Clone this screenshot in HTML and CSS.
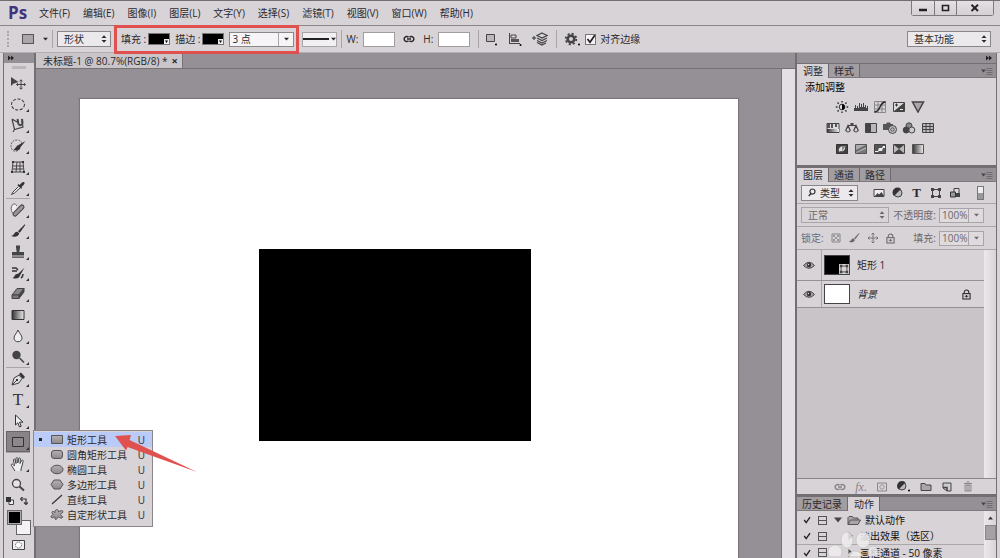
FILE: index.html
```html
<!DOCTYPE html>
<html lang="zh-CN">
<head>
<meta charset="utf-8">
<title>未标题-1</title>
<link rel="stylesheet" href="styles.css">
</head>
<body>
<svg class="sprite" aria-hidden="true">
  <defs>
    <linearGradient id="g-fade" x1="0" x2="1" y1="0" y2="0"><stop offset="0" stop-color="#333"/><stop offset="1" stop-color="#eee"/></linearGradient>
    <linearGradient id="g-shape" x1="0" x2="0" y1="0" y2="1"><stop offset="0" stop-color="#b4b0b4"/><stop offset="1" stop-color="#8c888c"/></linearGradient>
  </defs>
  <symbol id="updown" viewBox="0 0 6 8"><path d="M0.5 3 3 0.3 5.5 3zM0.5 5 3 7.7 5.5 5z" fill="currentColor"/></symbol>
  <symbol id="down" viewBox="0 0 6 4"><path d="M0 0.5h6L3 3.8z" fill="currentColor"/></symbol>
  <symbol id="forward" viewBox="0 0 6 6"><path d="M0 0.5 3 3 0 5.5zM3 0.5 6 3 3 5.5z" fill="currentColor"/></symbol>
  <symbol id="panelmenu" viewBox="0 0 12 8"><path d="M0 2.5h5L2.500 5.500z" fill="#444"/><path d="M5.500 1.500h6M5.500 3.500h6M5.500 5.500h6M5.500 7.500h6" stroke="#666" stroke-width=".8"/></symbol>
  <symbol id="tick" viewBox="0 0 10 10"><path d="M1.500 5 4 8.200 8.800 1.300" fill="none" stroke="#222" stroke-width="1.700"/></symbol>
  <symbol id="link" viewBox="0 0 12 8"><path d="M5.500 2.300A2.500 2.500 0 1 0 5.500 5.700M6.500 2.300A2.500 2.500 0 1 1 6.500 5.700M4 4h4" fill="none" stroke="currentColor" stroke-width="1.500"/></symbol>
  <symbol id="eye" viewBox="0 0 12 8"><path d="M.5 4.500Q6-2 11.500 4.500Q6 10 .5 4.500z" fill="#a9a5a9" stroke="#444" stroke-width="1"/><circle cx="6" cy="4" r="2.200" fill="#333"/><circle cx="5.500" cy="3.500" r=".7" fill="#ddd"/></symbol>
  <symbol id="lock" viewBox="0 0 10 12"><path d="M2.500 5V3.500a2.500 2.500 0 0 1 5 0V5" fill="none" stroke="currentColor" stroke-width="1.200"/><rect x="1" y="5" width="8" height="6" fill="none" stroke="currentColor" stroke-width="1.200"/><path d="M5 6.500v3M3 8h4" stroke="currentColor"/></symbol>
  <symbol id="folder" viewBox="0 0 14 11"><path d="M1 9.500V2.500l1-1h3.500l1 1.500H11v2M1 9.500 3.500 5H13.500L11 9.500z" fill="#aaa6aa" stroke="#555" stroke-width="1"/></symbol>
  <symbol id="brush" viewBox="0 0 16 16"><path d="M14.700 1.200 8 8.300 9.800 9.800 15.300 2z" fill="currentColor"/><path d="M7.300 8.800C4.500 8.200 4.300 12.500 1 13c3.500 1.600 7.600.7 8.200-2.800z" fill="currentColor"/></symbol>
  <symbol id="vectorbox" viewBox="0 0 12 12"><path d="M2.500 2.500h7v7h-7z" fill="none" stroke="#444"/><path d="M1 1h3v3H1zM8 1h3v3H8zM1 8h3v3H1zM8 8h3v3H8z" fill="#444"/></symbol>
</svg>

<div class="app">
  <header class="menubar">
    <div class="logo">Ps</div>
    <nav class="menus" aria-label="主菜单">
      <button>文件(F)</button><button>编辑(E)</button><button>图像(I)</button><button>图层(L)</button><button>文字(Y)</button><button>选择(S)</button><button>滤镜(T)</button><button>视图(V)</button><button>窗口(W)</button><button>帮助(H)</button>
    </nav>
    <div class="window-buttons">
      <button aria-label="最小化"><svg width="10" height="8"><path d="M1 6h8" stroke="#222" stroke-width="2.500"/></svg></button>
      <button aria-label="最大化"><svg width="10" height="8"><path d="M1.500 1.500h6v5h-6z" fill="none" stroke="#222" stroke-width="1.600"/></svg></button>
      <button class="close" aria-label="关闭"><svg width="10" height="8"><path d="M1.500.8 8 7M8 .8 1.500 7" stroke="#222" stroke-width="1.900"/></svg></button>
    </div>
  </header>

  <section class="options" aria-label="工具选项">
    <span class="grip"></span>
    <button class="preset" aria-label="工具预设"><span class="preset-shape"></span><svg width="5" height="4"><use href="#down"/></svg></button>
    <span class="rule"></span>
    <div class="select mode"><select aria-label="模式"><option>形状</option></select><svg width="6" height="8"><use href="#updown"/></svg></div>
    <div class="paint">
      <label for="fill">填充 :</label><button id="fill" class="swatch"><svg width="5" height="5"><path d="M0 0h5v5H0z" fill="#eee"/><path d="M1 1.500h3L2.500 4z"/></svg></button>
      <label for="stroke">描边 :</label><button id="stroke" class="swatch"><svg width="5" height="5"><path d="M0 0h5v5H0z" fill="#eee"/><path d="M1 1.500h3L2.500 4z"/></svg></button>
      <div class="combo stroke-size"><input value="3 点" aria-label="描边宽度"><button aria-label="宽度列表"><svg width="5" height="4"><use href="#down"/></svg></button></div>
    </div>
    <button class="line-type" aria-label="描边类型"><i></i><svg width="5" height="4"><use href="#down"/></svg></button>
    <span class="rule"></span>
    <label for="w" class="dim">W:</label><input id="w" class="size">
    <button class="chain" aria-label="链接宽高"><svg width="12" height="8"><use href="#link"/></svg></button>
    <label for="h" class="dim">H:</label><input id="h" class="size">
    <span class="rule wide"></span>
    <div class="ops">
      <button aria-label="路径操作"><svg width="14" height="14"><path d="M2.500 2.500h8v7h-8z" fill="#bbb7bb" stroke="#444"/><circle cx="12" cy="12.500" r="1"/></svg></button>
      <button aria-label="路径对齐"><svg width="14" height="14"><path d="M1.500 1v11M2 11.500h10" stroke="#444"/><path d="M3 3h5v3H3z" fill="none" stroke="#444"/><path d="M3 7h8v3H3z" fill="#555"/><circle cx="12.500" cy="13" r="1"/></svg></button>
      <button aria-label="路径排列"><svg width="16" height="14"><path d="M0 6h4M2 4v4" stroke="#333"/><path d="m10 1 5 2.500L10 6 5 3.500zM5 6l5 2.500L15 6M5 8.500 10 11l5-2.500M5 10.500l5 2.500 4-2" fill="none" stroke="#444" stroke-width="1.200"/></svg></button>
    </div>
    <span class="rule"></span>
    <button class="gear" aria-label="设置"><svg width="16" height="14"><circle cx="7" cy="7" r="3.300" fill="none" stroke="#444" stroke-width="2.600"/><circle cx="7" cy="7" r="5.300" fill="none" stroke="#444" stroke-width="1.800" stroke-dasharray="2.080"/><circle cx="15" cy="12.500" r="1"/></svg></button>
    <label class="check"><input type="checkbox" checked><svg width="10" height="10"><use href="#tick"/></svg>对齐边缘</label>
    <div class="select workspace"><select aria-label="工作区"><option>基本功能</option></select><svg width="6" height="8"><use href="#updown"/></svg></div>
  </section>

  <main class="main">
    <aside class="tools" aria-label="工具">
      <div class="strip"><svg width="6" height="6"><use href="#forward"/></svg></div>
      <div class="handle"></div>
      <div class="group">
        <button aria-label="移动"><svg viewBox="0 0 16 16"><path d="M1 2v9l2.300-2.200L8.500 7z" fill="#444"/><path d="M11 5v9M6.500 9.500h9M9.600 6.300 11 4.700l1.400 1.600M9.600 12.700 11 14.300l1.400-1.600M8 8.100 6.600 9.500 8 10.900M14 8.100l1.400 1.400L14 10.900" fill="none" stroke="#444"/></svg></button>
        <button class="more" aria-label="椭圆选框"><svg viewBox="0 0 16 16"><ellipse cx="8" cy="8.500" rx="6.500" ry="5.500" fill="none" stroke="#444" stroke-width="1.100" stroke-dasharray="3 1.500"/></svg></button>
        <button class="more" aria-label="套索"><svg viewBox="0 0 16 16"><path d="M2 2 4.500 12.500 13 10 12 4M2 2l5 3M4.500 12.500 3 15" fill="none" stroke="#444" stroke-width="1.200"/><path d="m7.500 2 .8 4.500c1 2.500 4 2 4.200-.5L12 1.800" fill="none" stroke="#444" stroke-width="2"/></svg></button>
        <button class="more" aria-label="快速选择"><svg viewBox="0 0 16 16"><path d="M8 12.500C4 14.500 1 12 1 8s2.500-6 6-6 5 2 4.500 4" fill="none" stroke="#666" stroke-dasharray="2 1"/><path d="m15.500 3-7 4 1.700 2.500zM8.800 7C6 7.500 6 10.500 3.500 11.500c3.500 2 7 .5 7-2.500z" fill="#333"/></svg></button>
        <button class="more" aria-label="透视裁剪"><svg viewBox="0 0 16 16"><path d="M3 3h10l1 10H2zM7 3 6 13M10 3v10M3 7h10M3 10h10" fill="none" stroke="#444"/><path d="M2 2h2v2H2zM12 2h2v2h-2zM1 12h2v2H1zM13 12h2v2h-2z" fill="#333"/></svg></button>
        <button class="more" aria-label="吸管"><svg viewBox="0 0 16 16"><path d="m9.500 5 2.500-2.500c2-1.500 3.500 0 2 2L11.500 7l.7 1-1.200.8L7.500 5.300l.8-1.200z" fill="#333"/><path d="M8.500 6.500 3 12l-1.500 2.500L4.500 13 10 8" fill="#eee" stroke="#444"/></svg></button>
      </div>
      <div class="group">
        <button class="more" aria-label="修复画笔"><svg viewBox="0 0 16 16"><path d="M7 4C4-1 0 4 1.500 8.500 2 11 4 13 5 12" fill="#eee" stroke="#666"/><path d="m5 12 7-7" stroke="#444" stroke-width="5" stroke-linecap="round"/><path d="m5 12 7-7" stroke="#99959a" stroke-width="3" stroke-linecap="round" stroke-dasharray="3 1"/></svg></button>
        <button class="more" aria-label="画笔"><svg><use href="#brush"/></svg></button>
        <button class="more" aria-label="图章"><svg viewBox="0 0 16 16"><path d="M6 1.500h4v2L9.300 8H14v3.500H2V8h4.700L6 3.500zM2 12.500h12v1.200H2z" fill="#444"/></svg></button>
        <button class="more" aria-label="历史画笔"><svg viewBox="0 0 16 16"><path d="M14.500 2.500 8 9l2 1.600zM8 8.700c-3.500 0-3 3.300-5.500 4.300 3.500 1.200 7 .5 7.500-2.500z" fill="#333"/><path d="M2 3h4l2 2M2 6h5M13 9q0 3-2 4" fill="none" stroke="#333" stroke-width="1.500"/></svg></button>
        <button class="more" aria-label="橡皮擦"><svg viewBox="0 0 16 16"><path d="M2 9 7 2.500h7L9 9z" fill="#888488" stroke="#444"/><path d="M9 9l5-6.500V6l-5 6.500z" fill="#444" stroke="#444"/><path d="M2 9h7v3.500H2z" fill="#777" stroke="#444"/></svg></button>
        <button class="more" aria-label="渐变"><svg viewBox="0 0 16 16"><path d="M2 3.500h12v9H2z" fill="url(#g-fade)" stroke="#333"/></svg></button>
        <button class="more" aria-label="模糊"><svg viewBox="0 0 16 16"><path d="M8 2C7 5 4 7 4 10c0 5 8 5 8 0 0-3-3-5-4-8z" fill="#eee" stroke="#444"/></svg></button>
        <button class="more" aria-label="减淡"><svg viewBox="0 0 16 16"><circle cx="6.500" cy="6" r="4.200" fill="#444"/><path d="m9.500 9 4.500 4.500" stroke="#444" stroke-width="1.600"/></svg></button>
      </div>
      <div class="group">
        <button class="more" aria-label="钢笔"><svg viewBox="0 0 16 16"><path d="M2 14 4 7l5-3 3 3.500L9 12z" fill="#ddd" stroke="#444"/><path d="m2 14 4.500-4.500" stroke="#444"/><circle cx="7" cy="9" r="1"/><path d="m9 3 2-1.500L15 6l-2 2z" fill="#333"/></svg></button>
        <button class="more type" aria-label="文字">T</button>
        <button class="more" aria-label="路径选择"><svg viewBox="0 0 16 16"><path d="M5.500 2v10l2.300-2.200L9.500 14l1.700-.8-1.700-4H13z" fill="#eee" stroke="#333"/></svg></button>
        <button class="more selected" aria-label="矩形工具"><svg viewBox="0 0 16 16"><path d="M2.500 3.500h11v9h-11z" fill="#8c888c" stroke="#333"/></svg></button>
      </div>
      <div class="group">
        <button class="more" aria-label="抓手"><svg viewBox="0 0 16 16"><path d="M5 15 1.500 9.500c-.8-1.500.8-2 1.500-1l1.500 1.500L3.500 4c0-1.200 1.500-1.200 1.700 0L6 7.500 6 2.500c0-1.200 1.700-1.200 1.800 0V7l1-4.500c.3-1.200 1.800-.8 1.600.4L10 7.500l1.500-3c.6-1 2-.4 1.600.7L12 10l-1 3v2" fill="#eee" stroke="#444"/></svg></button>
        <button aria-label="缩放"><svg viewBox="0 0 16 16"><circle cx="6.500" cy="6.500" r="4" fill="#e6e2e6" stroke="#444" stroke-width="1.300"/><path d="m9.500 9.500 4.500 4" stroke="#444" stroke-width="2"/></svg></button>
      </div>
      <div class="color-tools"><button aria-label="默认颜色"><svg width="8" height="8"><path d="M3 3h4.500v4.500H3z" fill="#eee" stroke="#444"/><path d="M0 0h5v5H0z" fill="#333"/></svg></button><button aria-label="切换颜色"><svg width="8" height="8"><path d="M2 2h4v4M2.500 0 .5 2l2 2M4 5.500l2 2 2-2" fill="none" stroke="#333" stroke-width="1.200"/></svg></button></div>
      <div class="colors"><span class="back"></span><span class="fore"></span></div>
      <button class="mask" aria-label="快速蒙版"><svg width="14" height="11"><path d="M.5.5h12v9H.5z" fill="#eee" stroke="#444"/><circle cx="6.500" cy="5" r="3" fill="#fff" stroke="#666" stroke-dasharray="1.500 .8"/></svg></button>

      <ul class="flyout">
        <li class="current"><button><b></b><svg viewBox="0 0 14 11"><path d="M1.500 1.500h11v8h-11z" fill="url(#g-shape)" stroke="#555"/></svg><span>矩形工具</span><kbd>U</kbd></button></li>
        <li><button><b></b><svg viewBox="0 0 14 11"><rect x="1.500" y="1.500" width="11" height="8" rx="2.500" fill="url(#g-shape)" stroke="#555"/></svg><span>圆角矩形工具</span><kbd>U</kbd></button></li>
        <li><button><b></b><svg viewBox="0 0 14 11"><ellipse cx="7" cy="5.500" rx="6" ry="4.300" fill="url(#g-shape)" stroke="#555"/></svg><span>椭圆工具</span><kbd>U</kbd></button></li>
        <li><button><b></b><svg viewBox="0 0 14 11"><path d="M4 1h6l3 4.500-3 4.500H4L1 5.500z" fill="url(#g-shape)" stroke="#555"/></svg><span>多边形工具</span><kbd>U</kbd></button></li>
        <li><button><b></b><svg viewBox="0 0 14 11"><path d="m2 10 10-9" stroke="#333" stroke-width="1.200"/></svg><span>直线工具</span><kbd>U</kbd></button></li>
        <li><button><b></b><svg viewBox="0 0 14 11"><path d="M5 3.500C4.500-.5 9 0 8.500 3c2-2 5-1.500 4.500 0-.5 1.500-2.500 1-2.500 2.500s3 1.500 2 3-3 0-4-.5-1.500 3-3 2.500.5-3-1-2.500-3 1.500-3.500 0 2-1.500 2-2.500-1.500-1.500-1-2.500 2.500-.5 3 .5z" fill="url(#g-shape)" stroke="#555"/></svg><span>自定形状工具</span><kbd>U</kbd></button></li>
      </ul>
      <svg class="arrow" width="84" height="40" aria-hidden="true"><path d="M1 2 17 1 15.500 6 83 38 13.500 13 12 16.500z" fill="#e0504e"/></svg>
    </aside>

    <section class="document">
      <div class="doc-tabs"><div class="doc-tab"><span>未标题-1 @ 80.7%(RGB/8) *</span><button aria-label="关闭文档">×</button></div></div>
      <div class="doc-body">
        <div class="pasteboard"><div class="artboard"><div class="shape"></div></div></div>
        <div class="doc-scroll"></div>
      </div>
    </section>

    <aside class="panels">
      <div class="strip right"><svg width="6" height="6"><use href="#forward"/></svg></div>
      <section class="panel adjust">
        <div class="tabs"><button class="on">调整</button><button>样式</button><svg class="pm" width="12" height="8"><use href="#panelmenu"/></svg></div>
        <h2>添加调整</h2>
        <div class="adjust-grid">
          <div>
            <button aria-label="亮度"><svg viewBox="0 0 14 12"><circle cx="7" cy="6" r="2.800" fill="#ddd" stroke="#333"/><path d="M7 3.200a2.800 2.800 0 0 1 0 5.600z"/><path d="M7 0v1.500M7 10.500V12M.8 6h1.700M11.500 6h1.700M2.500 1.500l1.200 1.200M10.300 9.300l1.200 1.200M2.500 10.500l1.200-1.200M10.300 2.700l1.200-1.200" stroke="#333" stroke-width="1.400"/></svg></button>
            <button aria-label="色阶"><svg viewBox="0 0 14 12"><path d="M0 10V7h1V4h1v3h1V5h1v2h1V2h1v4h1V3h1v3h1V2h1v4h1V4h1v3h1V5h1v5z" fill="#444"/></svg></button>
            <button aria-label="曲线"><svg viewBox="0 0 14 12"><path d="M1.500.5h11v11h-11zM5 .5v11M9 .5v11M1.500 4h11M1.500 8h11" fill="none" stroke="#777" stroke-width=".8"/><path d="M1.500 11C8 11 6 1 12.500 1" fill="none" stroke="#222" stroke-width="1.400"/></svg></button>
            <button aria-label="曝光度"><svg viewBox="0 0 14 12"><path d="M1.500 1.500h11v9h-11z" fill="#ddd" stroke="#444"/><path d="M12.500 1.500v9h-11z" fill="#444"/><path d="M3 4h3M4.500 2.500v3" stroke="#333"/><path d="M8 8.500h3" stroke="#eee"/></svg></button>
            <button aria-label="自然饱和度"><svg viewBox="0 0 14 12"><path d="M1.500 1h11L7 11z" fill="#aaa6aa" stroke="#444" stroke-width="1.500"/></svg></button>
          </div>
          <div>
            <button aria-label="色相"><svg viewBox="0 0 14 12"><path d="M1 1.500h12v9H1z" fill="#ddd" stroke="#444"/><path d="M1 2h3v4H1zM5 2h2v4H5zM9 2h2v3H9z" fill="#555"/><path d="M1 7h12v3H1z" fill="url(#g-fade)"/></svg></button>
            <button aria-label="色彩平衡"><svg viewBox="0 0 14 12"><path d="M3.500 3.500h7M.8 8.500l2.200-5 2.200 5q-2.200 3-4.400 0zM8.800 8.500l2.200-5 2.200 5q-2.200 3-4.400 0z" fill="none" stroke="#444" stroke-width="1.200"/><path d="M5.500 1h3v3h-3z" fill="#444"/></svg></button>
            <button aria-label="黑白"><svg viewBox="0 0 14 12"><path d="M1.500 1.500h11v9h-11z" fill="#bbb7bb" stroke="#444"/><path d="M1.500 1.500H7v9H1.500z" fill="#444"/></svg></button>
            <button aria-label="照片滤镜"><svg viewBox="0 0 14 12"><path d="M0 2h3l1-1.500h3L8 2h2v6H0z" fill="#555"/><circle cx="9.500" cy="7.500" r="4" fill="#c4c0c4" stroke="#444"/><circle cx="9.500" cy="7.500" r="1.700" fill="none" stroke="#555"/></svg></button>
            <button aria-label="通道混合器"><svg viewBox="0 0 14 12"><circle cx="7" cy="3.800" r="3" fill="#888" stroke="#444"/><circle cx="4.200" cy="8" r="3" fill="#444" stroke="#444"/><circle cx="9.800" cy="8" r="3" fill="#ccc" stroke="#444"/></svg></button>
            <button aria-label="颜色查找"><svg viewBox="0 0 14 12"><path d="M1.500 1.500h11v9h-11zM5 1.500v9M9 1.500v9M1.500 4.500h11M1.500 7.500h11" fill="#bbb" stroke="#444"/></svg></button>
          </div>
          <div>
            <button aria-label="反相"><svg viewBox="0 0 14 12"><path d="M1.500 1.500h11v9h-11z" fill="#444" stroke="#333"/><path d="M4 9C3 4 6 3 10 3c1 4-2 6-5 5z" fill="#ddd"/><path d="M7 3h4L7 8z" fill="#888"/></svg></button>
            <button aria-label="色调分离"><svg viewBox="0 0 14 12"><path d="M1.500 1.500h11v9h-11z" fill="#aaa" stroke="#555"/><path d="M2 7 12 2v2L2 9z" fill="#666"/><path d="M2 10 12 6v4z" fill="#777"/></svg></button>
            <button aria-label="阈值"><svg viewBox="0 0 14 12"><path d="M1.500 1.500h11v9h-11z" fill="#555" stroke="#444"/><path d="M2 8h3l1-3h3l1-2h2v2h-2L9 8H6L5 9H2z" fill="#eee"/></svg></button>
            <button aria-label="可选颜色"><svg viewBox="0 0 14 12"><path d="M1.500 1.500h11v9h-11z" fill="#bbb" stroke="#444"/><path d="M2 2h10L7 6zM2 10h10L7 6z" fill="#444"/></svg></button>
            <button aria-label="渐变映射"><svg viewBox="0 0 14 12"><path d="M1.500 1.500h11v9h-11z" fill="url(#g-fade)" stroke="#555"/></svg></button>
          </div>
        </div>
      </section>

      <section class="panel layers">
        <div class="tabs"><button class="on">图层</button><button>通道</button><button>路径</button><svg class="pm" width="12" height="8"><use href="#panelmenu"/></svg></div>
        <div class="row filter">
          <div class="select kind"><svg class="lens" width="8" height="9"><circle cx="4.500" cy="3.500" r="2.500" fill="none" stroke="#333" stroke-width="1.200"/><path d="M3 5.500.8 8" stroke="#333" stroke-width="1.400"/></svg><select aria-label="过滤类型"><option>类型</option></select><svg width="6" height="8"><use href="#updown"/></svg></div>
          <div class="filters">
            <button aria-label="像素"><svg width="12" height="12"><path d="M1 2.500h10v7H1z" fill="#eee" stroke="#444"/><path d="m2 9 2.500-3L6 7.500 8.500 5 11 9z" fill="#444"/></svg></button>
            <button aria-label="调整"><svg width="12" height="12"><circle cx="6" cy="6" r="4" fill="#bbb" stroke="#444"/><path d="M2 9 9 2A4.500 4.500 0 0 0 2 9z" fill="#333"/></svg></button>
            <button aria-label="文字" class="type-filter">T</button>
            <button aria-label="形状"><svg width="12" height="12"><use href="#vectorbox"/></svg></button>
            <button aria-label="智能对象"><svg width="12" height="12"><path d="M5 1.500h5v6H5z" fill="#ddd" stroke="#444"/><path d="M1.500 5h5v5h-5z" fill="#999" stroke="#333"/><path d="M7 6h4v4H7z" fill="#444"/></svg></button>
          </div>
          <button class="toggle" aria-label="过滤开关"></button>
        </div>
        <div class="row muted">
          <div class="select blend"><select aria-label="混合模式"><option>正常</option></select><svg width="6" height="8"><use href="#updown"/></svg></div>
          <label for="opacity" class="end">不透明度:</label>
          <div class="combo pct"><input id="opacity" value="100%"><button aria-label="不透明度滑块"><svg width="5" height="4"><use href="#down"/></svg></button></div>
        </div>
        <div class="row muted">
          <span>锁定:</span>
          <div class="locks">
            <button aria-label="锁定透明"><svg width="10" height="10"><path d="M1 1h8v8H1z" fill="none" stroke="#888"/><path d="M2 2h2v2H2zM6 2h2v2H6zM4 4h2v2H4zM2 6h2v2H2zM6 6h2v2H6z" fill="#999"/></svg></button>
            <button aria-label="锁定像素"><svg width="12" height="12"><use href="#brush"/></svg></button>
            <button aria-label="锁定位置"><svg width="12" height="12"><path d="M6 1v10M1 6h10M4.500 2.500 6 1l1.500 1.500M4.500 9.500 6 11l1.500-1.500M2.500 4.500 1 6l1.500 1.500M9.500 4.500 11 6 9.500 7.500" fill="none" stroke="#777"/></svg></button>
            <button aria-label="锁定全部"><svg width="9" height="11"><use href="#lock"/></svg></button>
          </div>
          <label for="fillpct" class="end">填充:</label>
          <div class="combo pct"><input id="fillpct" value="100%"><button aria-label="填充滑块"><svg width="5" height="4"><use href="#down"/></svg></button></div>
        </div>
        <div class="layer-list">
          <ul>
            <li class="first"><button class="vis" aria-label="可见性"><svg width="12" height="8"><use href="#eye"/></svg></button><span class="thumb black"><svg width="10" height="10"><path d="M0 0h10v10H0z" fill="#d8d3d7"/><use href="#vectorbox"/></svg></span><span>矩形 1</span></li>
            <li><button class="vis" aria-label="可见性"><svg width="12" height="8"><use href="#eye"/></svg></button><span class="thumb"></span><em>背景</em><svg class="locked" width="9" height="11"><use href="#lock"/></svg></li>
          </ul>
          <div class="vscroll"></div>
        </div>
        <div class="layer-actions">
          <button class="dim-icon" aria-label="链接图层"><svg width="12" height="8"><use href="#link"/></svg></button>
          <button class="dim-icon fx" aria-label="图层样式">fx.</button>
          <button aria-label="添加蒙版"><svg width="12" height="10"><path d="M1.500 1h9v8h-9z" fill="none" stroke="#888"/><circle cx="6" cy="5" r="2.200" fill="none" stroke="#999"/></svg></button>
          <button aria-label="新建调整"><svg width="13" height="11"><circle cx="5" cy="5" r="4" fill="#bbb" stroke="#444"/><path d="M1.500 8.500 8.500 1.500A4.500 4.500 0 0 0 1.500 8.500z" fill="#333"/><circle cx="12" cy="9.500" r="1"/></svg></button>
          <button aria-label="新建组"><svg width="12" height="10"><path d="M1 8.500v-7h4l1 1.500h5v5.500z" fill="#aaa6aa" stroke="#444"/></svg></button>
          <button aria-label="新建图层"><svg width="12" height="10"><path d="M2 1h8v8H6L2 6z" fill="#ccc" stroke="#444"/><path d="M2 5.500h4V9" fill="none" stroke="#444" stroke-width="1.500"/></svg></button>
          <button aria-label="删除"><svg width="12" height="11"><path d="M2 2.500h8M4.500 1h3M3 4h6v6H3zM5 4v6M7 4v6" fill="none" stroke="#888"/></svg></button>
        </div>
      </section>

      <section class="panel actions">
        <div class="tabs"><button>历史记录</button><button class="on">动作</button><svg class="pm" width="12" height="8"><use href="#panelmenu"/></svg></div>
        <div class="action-body">
          <ul>
            <li><svg width="8" height="8" viewBox="0 0 10 10"><use href="#tick"/></svg><i class="modal"></i><svg class="tri" width="8" height="6"><path d="M0 .5h8L4 5.500z" fill="#444"/></svg><svg width="14" height="11"><use href="#folder"/></svg><span>默认动作</span></li>
            <li class="nested"><svg width="8" height="8" viewBox="0 0 10 10"><use href="#tick"/></svg><i class="modal"></i><svg class="tri" width="5" height="8"><path d="M.5 0v8L5 4z" fill="#444"/></svg><span>淡出效果（选区）</span></li>
            <li class="nested lined"><svg width="8" height="8" viewBox="0 0 10 10"><use href="#tick"/></svg><i class="modal"></i><svg class="tri" width="5" height="8"><path d="M.5 0v8L5 4z" fill="#444"/></svg><span>画框通道 - 50 像素</span></li>
          </ul>
          <div class="vscroll with-thumb"><svg width="5" height="4"><path d="M0 3.500h5L2.500.5z" fill="#333"/></svg><b></b></div>
          <svg class="watermark" width="60" height="28" aria-hidden="true"><g fill="#f0eeee" fill-opacity=".82" stroke="#c0bcbe" stroke-width=".6"><ellipse cx="20" cy="12" rx="6" ry="8"/><ellipse cx="36" cy="12" rx="7" ry="8"/><ellipse cx="8" cy="24" rx="7" ry="7"/><ellipse cx="28" cy="30" rx="8" ry="7"/><ellipse cx="46" cy="25" rx="5" ry="7"/></g></svg>
        </div>
      </section>
    </aside>
  </main>
</div>
</body>
</html>
```
FILE: styles.css
```css
* { box-sizing: border-box; }

:root {
  --face: #d8d3d7;
  --dark: #949095;
  --line: #8a868a;
  --edge: #726e72;
  --ink: #2c292c;
}

body {
  margin: 0;
  font: 10px/14px "Open Sans", "Noto Sans CJK SC", sans-serif;
  color: var(--ink);
  background: var(--face);
}

button, input, select {
  font: inherit;
  color: inherit;
  margin: 0;
  padding: 0;
  border: 0;
  background: none;
  border-radius: 0;
}

button { display: flex; align-items: center; justify-content: center; }
ul { list-style: none; margin: 0; padding: 0; }
svg { display: block; flex: none; }
.sprite { position: absolute; width: 0; height: 0; }

.app {
  height: 100vh;
  display: flex;
  flex-direction: column;
  overflow: hidden;
  border-top: 1px solid var(--edge);
}

/* menu bar */
.menubar {
  display: flex;
  align-items: center;
  height: 25px;
  padding: 0 6px 0 8px;
  border-bottom: 1px solid var(--line);
}
.logo {
  width: 31px;
  font: bold 17px/22px "Open Sans", sans-serif;
  color: #41347c;
}
.menus { display: flex; gap: 13px; }
.window-buttons {
  display: flex;
  align-self: flex-start;
  margin-left: auto;
  border: 1px solid #7d797d;
  border-top: 0;
  border-radius: 0 0 3px 3px;
}
.window-buttons button { width: 22px; height: 14px; background: linear-gradient(#e4e0e4, #d4d0d4); }
.window-buttons button + button { border-left: 1px solid #7d797d; }
.window-buttons .close { width: 37px; }

/* options bar */
.options {
  display: flex;
  align-items: center;
  height: 27px;
  padding: 0 9px 0 7px;
  border-bottom: 1px solid #b3aeb3;
}
.grip { width: 3px; height: 16px; border-left: 2px dotted #aaa6aa; margin-right: 12px; }
.preset { gap: 9px; }
.preset-shape { width: 12px; height: 10px; border: 1px solid #555; background: #aaa6aa; }
.rule { width: 1px; height: 18px; background: #a8a4a8; margin: 0 4px; }
.rule.wide { margin: 0 5px 0 8px; }
.select { display: flex; align-items: center; border: 1px solid #8a868a; background: #ece9ec; height: 16px; padding: 0 3px 0 6px; }
.select select { flex: 1; min-width: 0; appearance: none; outline: 0; }
.mode { width: 54px; }
.paint { position: relative; display: flex; align-items: center; margin-left: 10px; gap: 2px; }
.paint::after {
  content: "";
  position: absolute;
  inset: -7px -5px -7px -7px;
  border: 3px solid #e0504e;
  pointer-events: none;
}
.paint label { white-space: nowrap; }
.swatch { width: 22px; height: 12px; margin-right: 3px; background: #000; border: 1px solid #777; align-items: flex-end; justify-content: flex-end; }
.combo { display: flex; border: 1px solid #8a868a; background: #f6f4f6; height: 15px; }
.combo input { flex: 1; min-width: 0; padding-left: 2px; }
.combo button { width: 15px; border-left: 1px solid #a8a4a8; }
.stroke-size { width: 65px; }
.line-type { width: 35px; height: 15px; margin-left: 8px; border: 1px solid #a8a4a8; background: #f2f0f2; gap: 2px; }
.line-type i { width: 26px; height: 2px; background: #222; }
.dim { margin-right: 5px; }
.size { width: 32px; height: 15px; border: 1px solid #a09ca0; background: #fff; }
.chain { margin: 0 8px; }
.ops { display: flex; gap: 10px; margin-right: 4px; }
.gear { margin: 0 5px 0 3px; }
.check { display: flex; align-items: center; gap: 4px; }
.check input { appearance: none; width: 11px; height: 11px; border: 1px solid #777; background: #f4f2f4; }
.check svg { margin-left: -14px; }
.workspace { width: 84px; margin-left: auto; }

/* main area */
.main { flex: 1; min-height: 0; display: flex; padding: 0 3px; background: var(--face); }
.strip { height: 10px; background: var(--dark); padding: 2px 4px; color: #222; flex: none; }
.strip.right { display: flex; justify-content: flex-end; }

/* tools */
.tools { position: relative; width: 33px; flex: none; border: solid var(--edge); border-width: 0 2px 0 1px; background: var(--face); }
.handle { height: 9px; padding: 3px 8px; }
.handle::before { content: ""; display: block; height: 3px; background: #bcb7bc; }
.group { border-top: 1px solid #a8a4a8; margin: 0 4px 0 2px; }
.handle + .group { border-top: 0; }
.group button { position: relative; width: 100%; height: 21px; color: #333; }
.group svg { width: 16px; height: 16px; }
.more::after {
  content: "";
  position: absolute;
  right: 1px;
  bottom: 2px;
  border: solid transparent;
  border-width: 0 0 3px 3px;
  border-bottom-color: #333;
}
.group .type { font: 17px/20px "Liberation Serif", serif; }
.group .selected { background: #878387; box-shadow: inset 0 0 0 1px #666; }
.color-tools { display: flex; justify-content: space-between; padding: 2px 6px 2px 2px; }
.colors { display: grid; width: 24px; height: 25px; margin: 3px 0 0 3px; }
.colors span { grid-area: 1 / 1; width: 15px; height: 15px; border: 1px solid #666; }
.fore { background: #000; box-shadow: inset 0 0 0 1px #aaa; }
.back { background: #f4f2f4; place-self: end; }
.mask { width: 100%; margin-top: 5px; }

.flyout {
  position: absolute;
  z-index: 2;
  left: 29px;
  top: 377px;
  width: 120px;
  padding: 1px 0 4px;
  background: var(--face);
  border: 1px solid #8a868a;
}
.flyout button { width: 100%; height: 15px; justify-content: flex-start; }
.flyout b { width: 3px; height: 3px; margin: 0 8px 0 5px; }
.flyout .current { background: #b9cbf6; }
.flyout .current b { background: #222; }
.flyout svg { width: 14px; height: 11px; margin-right: 3px; }
.flyout kbd { font: inherit; margin: 0 7px 0 auto; }
.arrow { position: absolute; z-index: 3; left: 110px; top: 381px; }

/* document */
.document { flex: 1; min-width: 0; display: flex; flex-direction: column; background: var(--dark); }
.doc-tabs { display: flex; height: 16px; border-bottom: 1px solid #767276; }
.doc-tab { display: flex; align-items: center; gap: 4px; padding: 0 4px 0 7px; background: #c9c5c9; border-right: 1px solid #767276; }
.doc-tab button { font: bold 11px/12px "Open Sans", sans-serif; }
.doc-body { flex: 1; min-height: 0; display: flex; }
.pasteboard { flex: 1; padding: 30px 43px 0 44px; border-right: 1px solid #767276; display: flex; }
.artboard { flex: 1; background: #fff; box-shadow: 0 0 1px 1px #7a767a; padding: 150px 207px 0 179px; }
.shape { height: 192px; background: #000; }
.doc-scroll { width: 13px; background: #e3dfe4; }

/* panels */
.panels { width: 202px; flex: none; display: flex; flex-direction: column; border: solid var(--edge); border-width: 0 1px 0 2px; background: var(--face); }
.panel { border-bottom: 2px solid var(--edge); flex: none; }
.tabs { display: flex; height: 15px; border-top: 1px solid var(--edge); border-bottom: 1px solid #7d797d; background: var(--dark); align-items: stretch; flex: none; }
.tabs button { padding: 0 5px; border-right: 1px solid #6d696d; background: #a19da1; }
.tabs .on { background: var(--face); margin-bottom: -1px; padding-left: 6px; }
.pm { margin: 3px 3px 0 auto; }
.adjust { height: 104px; }
.adjust h2 { font: inherit; margin: 2px 0 0 8px; color: #000; }
.adjust-grid { display: flex; flex-direction: column; width: 114px; margin: 5px 0 0 26px; gap: 5px; }
.adjust-grid div { display: flex; justify-content: center; }
.adjust-grid button { width: 19px; height: 16px; }
.adjust-grid svg { width: 14px; height: 12px; }

.layers { flex: 1; min-height: 0; display: flex; flex-direction: column; }
.row { display: flex; align-items: center; height: 23px; padding: 0 12px 0 4px; border-bottom: 1px solid #aaa6aa; flex: none; }
.filter { height: 22px; }
.muted { color: #6c686c; }
.kind { width: 57px; gap: 4px; }
.filters { display: flex; gap: 8px; margin-left: 15px; }
.filters button { width: 11px; height: 12px; }
.filters .type-filter { font: bold 13px/12px "Liberation Serif", serif; }
.toggle { width: 7px; height: 14px; border: 1px solid #777; background: linear-gradient(#eee 50%, #999 50%); margin-left: auto; }
.blend { width: 88px; background: #d8d4d8; border-color: #a8a4a8; }
.end { margin: 0 3px 0 auto; }
.pct { width: 45px; background: #dedade; border-color: #a8a4a8; }
.locks { display: flex; align-items: center; gap: 7px; margin-left: 7px; }
.layer-list { flex: 1; min-height: 0; display: flex; background: #c9c4c8; }
.layer-list ul { flex: 1; }
.layer-list li { display: flex; align-items: center; height: 27px; background: var(--face); border-bottom: 1px solid #949095; }
.layer-list .first { height: 31px; }
.vis { width: 25px; align-self: stretch; border-right: 1px solid #aaa6aa; }
.thumb { display: flex; justify-content: flex-end; align-items: flex-end; width: 26px; height: 20px; margin: 0 7px 0 2px; border: 1px solid #444; background: #fff; }
.thumb.black { background: #000; }
.locked { margin: 0 13px 0 auto; }
.vscroll { width: 12px; background: linear-gradient(90deg, #ece9ec, #d8d3d7); }
.layer-actions { display: flex; align-items: center; justify-content: space-between; height: 16px; padding: 0 22px 0 37px; border-top: 1px solid var(--line); flex: none; }
.dim-icon { color: #888488; }
.fx { font: italic 12px/14px "Liberation Serif", serif; }

.actions { height: 62px; border-bottom: 0; }
.action-body { position: relative; display: flex; height: 48px; overflow: hidden; }
.action-body ul { flex: 1; padding-top: 1px; }
.action-body li { display: flex; align-items: center; height: 16px; padding-left: 6px; white-space: nowrap; color: #111; }
.modal { width: 9px; height: 9px; border: 1px solid #555; margin: 0 7px; background: linear-gradient(transparent 3px, #555 3px, #555 4px, transparent 4px); }
.tri { margin-right: 5px; }
.action-body span { margin-left: 4px; }
.nested .tri { margin-left: 14px; }
.nested span { margin-left: 2px; }
.lined { border-top: 1px solid #aaa6aa; }
.with-thumb { display: flex; flex-direction: column; align-items: center; gap: 5px; padding-top: 5px; }
.with-thumb b { width: 11px; height: 15px; background: #a5a1a5; border: 1px solid #888; }
.watermark { position: absolute; left: 30px; bottom: 3px; }
```
